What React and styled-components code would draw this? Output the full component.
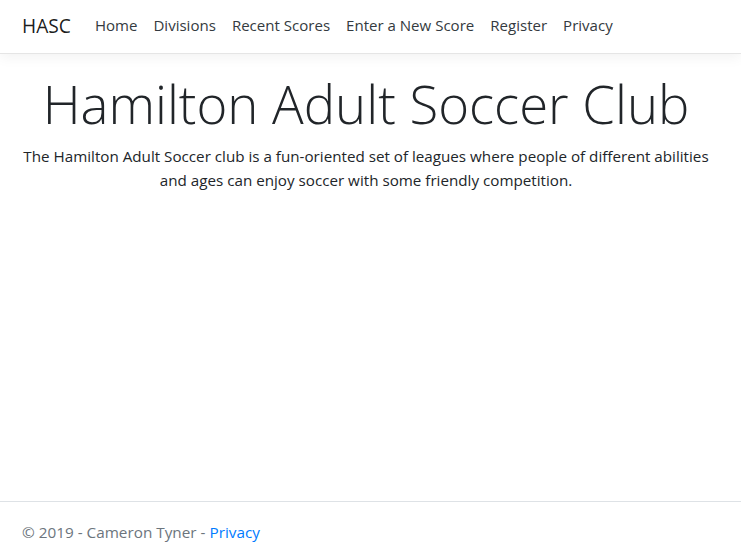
import React from "react";
import styled, { createGlobalStyle } from "styled-components";

const links = ["Home", "Divisions", "Recent Scores", "Enter a New Score", "Register", "Privacy"];

const App = () => {
  return (
    <>
      <GlobalStyle />
      <Page>
        <Navbar>
          <Brand href="#">HASC</Brand>
          <NavList>
            {links.map((l) => (
              <NavLink key={l} href="#">
                {l}
              </NavLink>
            ))}
          </NavList>
        </Navbar>
        <Main>
          <Title>Hamilton Adult Soccer Club</Title>
          <Lead>
            The Hamilton Adult Soccer club is a fun-oriented set of leagues where people of different abilities
            and ages can enjoy soccer with some friendly competition.
          </Lead>
        </Main>
        <Footer>
          © 2019 - Cameron Tyner - <FooterLink href="#">Privacy</FooterLink>
        </Footer>
      </Page>
    </>
  );
};

export default App;

// ======== Global ========

const GlobalStyle = createGlobalStyle`
  html, body {
    margin: 0;
    padding: 0;
    background: #fff;
  }
  body {
    font-family: "Open Sans", "Noto Sans", sans-serif;
    font-size: 16px;
    color: #212529;
  }
  a { text-decoration: none; }
`;

// ======== Styled Components ========

const Page = styled.div`
  height: 100vh;
  display: flex;
  flex-direction: column;
  overflow: hidden;
`;

const Navbar = styled.nav`
  box-sizing: border-box;
  flex: none;
  height: 54px;
  display: flex;
  align-items: center;
  padding: 0 22px 3px;
  background: #fff;
  border-bottom: 1px solid #e5e5e5;
  box-shadow: 0 4px 12px rgba(0, 0, 0, 0.05);
`;

const Brand = styled.a`
  font-size: 19.2px;
  color: rgba(0, 0, 0, 0.9);
  margin-right: 16px;
`;

const NavList = styled.div`
  display: flex;
`;

const NavLink = styled.a`
  font-size: 15.05px;
  color: #343a40;
  padding: 0 8px;
`;

const Main = styled.main`
  flex: 1;
  padding: 16px 24px 0 15px;
  text-align: center;
`;

const Title = styled.h1`
  margin: 0 0 7px;
  font-size: 52.7px;
  font-weight: 300;
  line-height: 67px;
  color: #212529;
`;

const Lead = styled.p`
  margin: 0;
  font-size: 15.2px;
  line-height: 24px;
`;

const Footer = styled.footer`
  flex: none;
  box-sizing: border-box;
  height: 55px;
  line-height: 60px;
  overflow: hidden;
  border-top: 1px solid #dee2e6;
  padding: 0 22px;
  color: #6c757d;
  font-size: 15.3px;
  white-space: nowrap;
`;

const FooterLink = styled.a`
  color: #007bff;
`;
